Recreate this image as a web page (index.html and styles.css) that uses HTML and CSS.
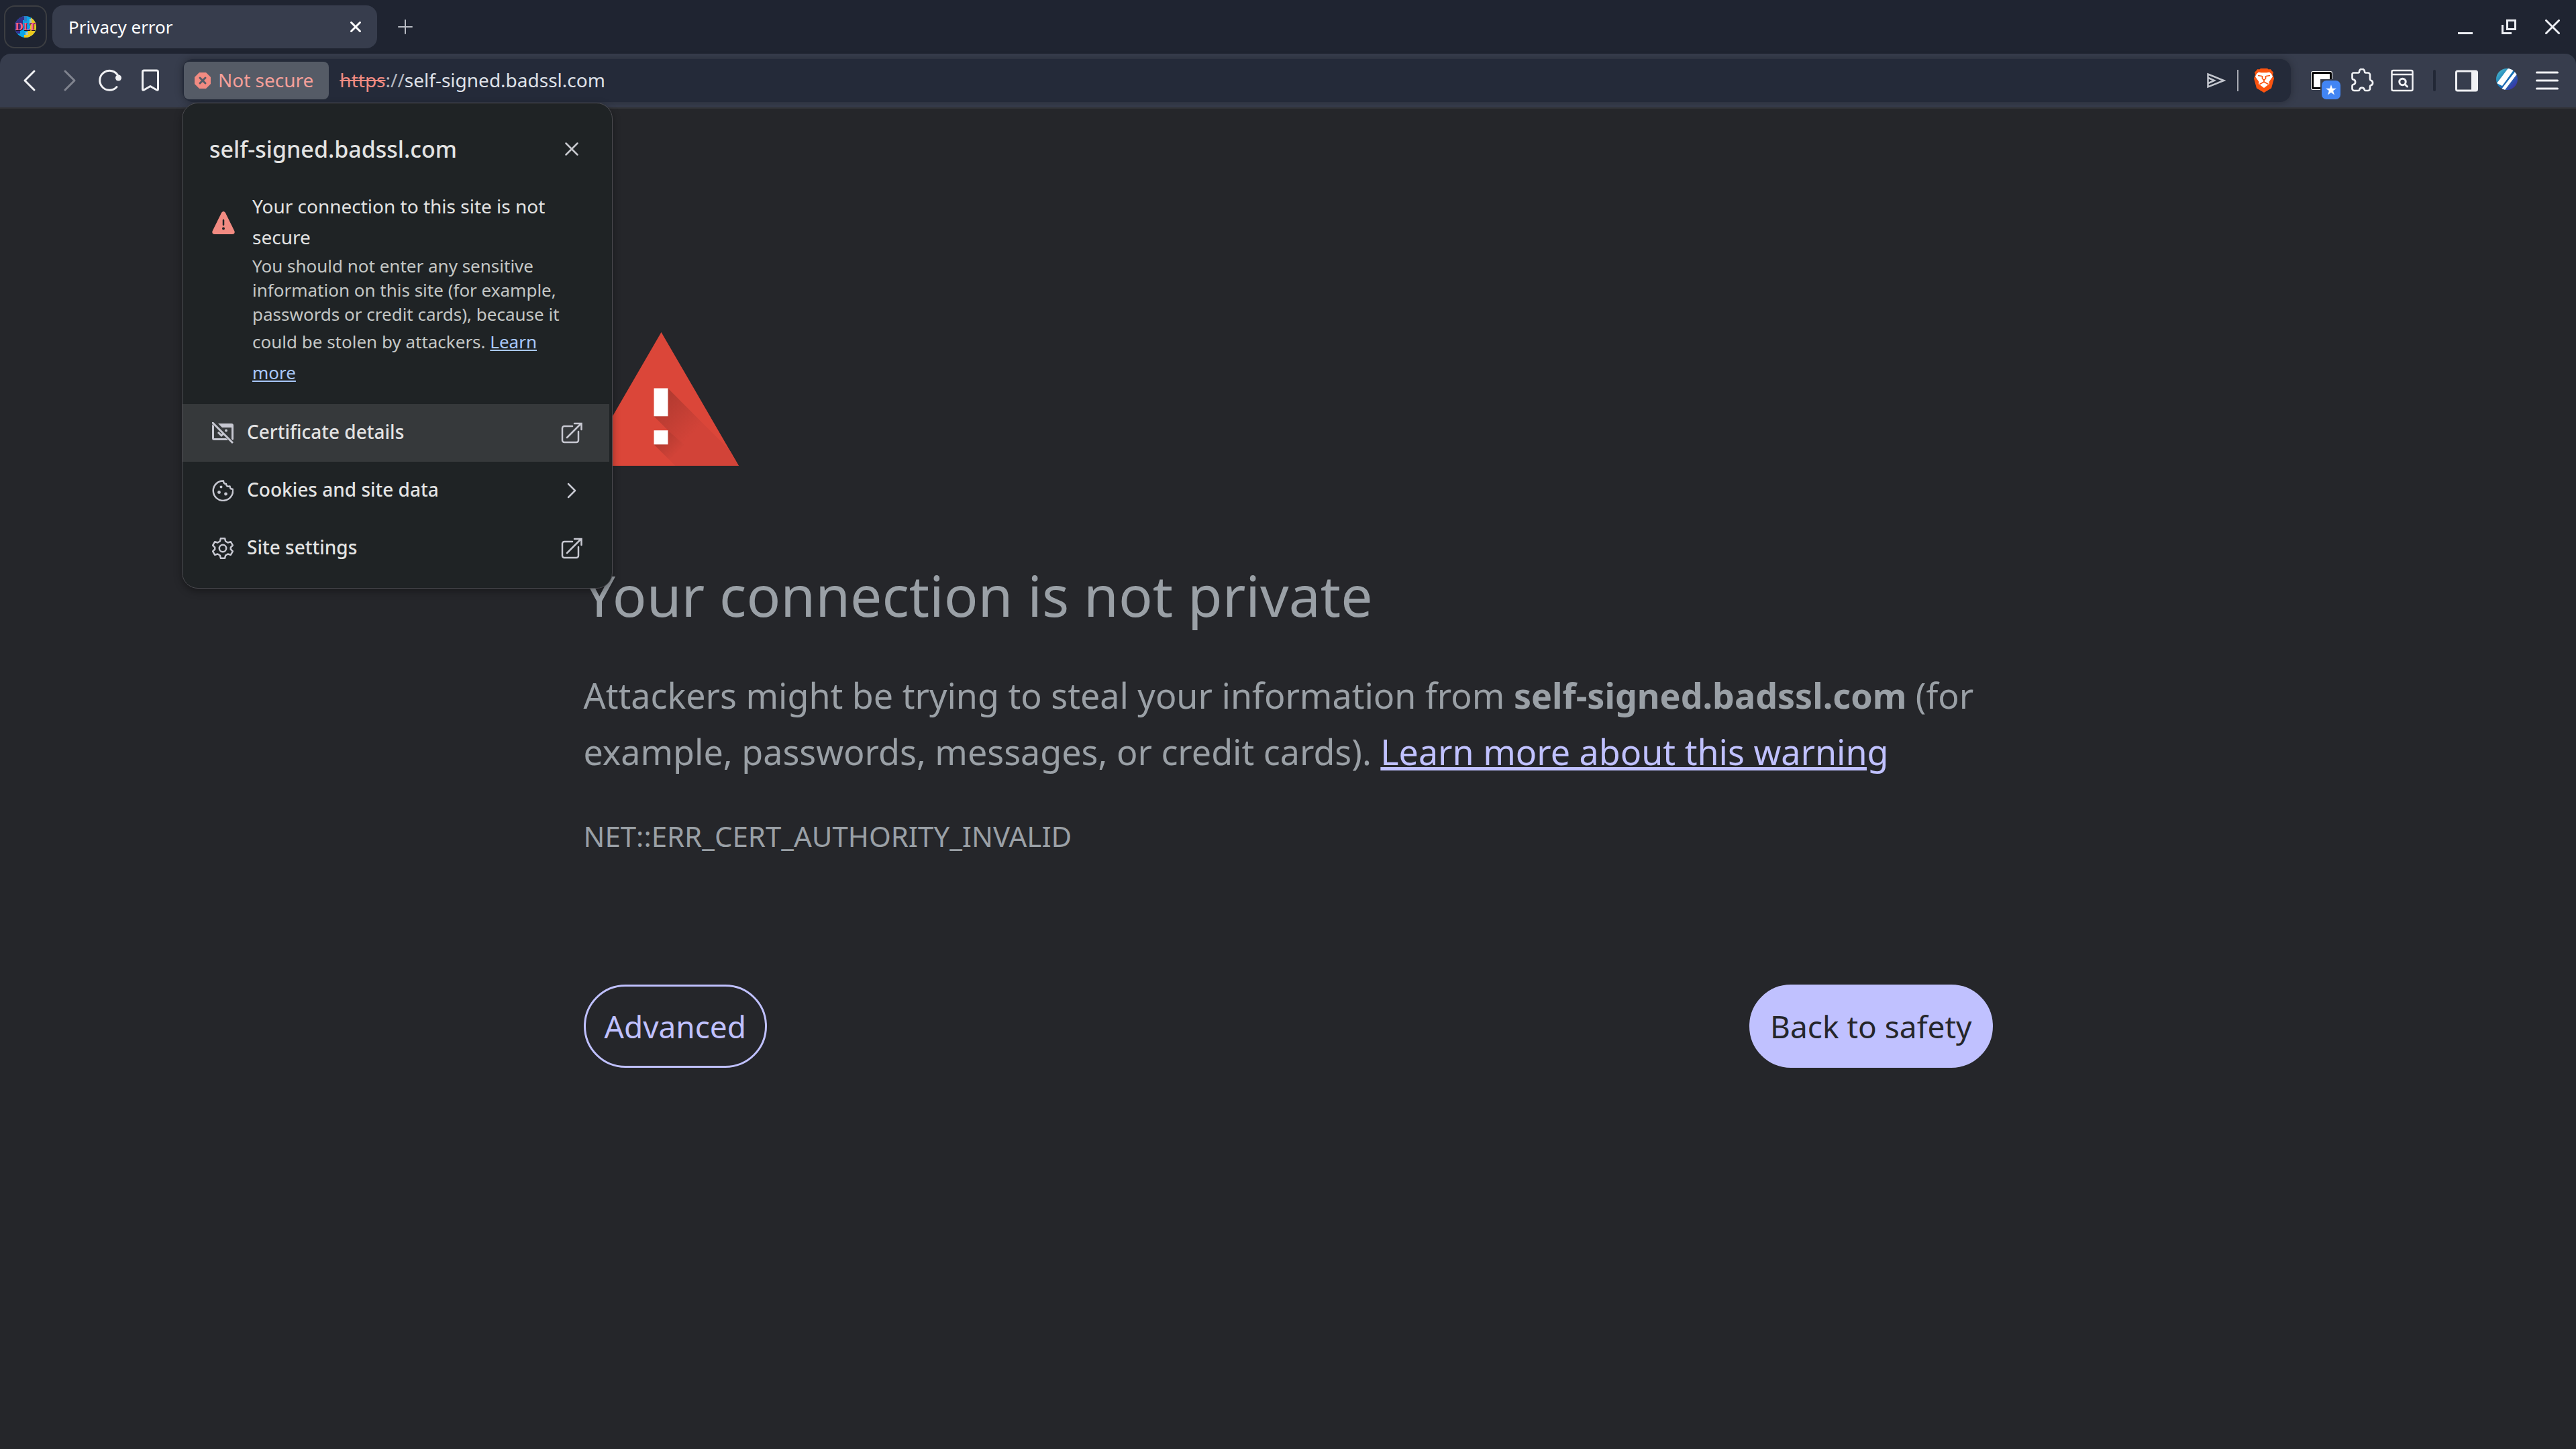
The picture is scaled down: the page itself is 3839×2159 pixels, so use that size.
FILE: index.html
```html
<!DOCTYPE html>
<html lang="en">
<head>
  <meta charset="UTF-8" />
  <meta name="viewport" content="width=device-width, initial-scale=1.0"/>
  <title>Privacy error</title>
  <link rel="stylesheet" href="styles.css">
</head>
<body>

<header class="tab-strip">
  <button class="profile" aria-label="Pinned tab">
    <svg width="32" height="32" viewBox="0 0 32 32">
      <clipPath id="disc"><circle cx="16" cy="16" r="16"/></clipPath>
      <g clip-path="url(#disc)">
        <rect width="32" height="32" fill="#0aa5e8"/>
        <path d="M0 0h14v6h-2v12H8v8H0z" fill="#352f86"/>
        <path d="M14 0h4v8h-4z" fill="#2f7fc4"/>
        <path d="M24 0h8v32H14v-4h5v-6h4V8h1z" fill="#ecc81c"/>
        <path d="M22 4h3v8h-3zM16 24h4v4h-4z" fill="#a9c4c0"/>
      </g>
      <text class="logo-shade" x="17" y="22" text-anchor="middle">DLT</text>
      <text class="logo-text" x="16" y="21" text-anchor="middle">DLT</text>
    </svg>
  </button>

  <div class="tab">
    <span class="tab-title">Privacy error</span>
    <button class="icon-button tab-close" aria-label="Close tab">
      <svg width="18" height="18" viewBox="0 0 18 18"><path d="M2.500 2.500l13 13M15.500 2.500l-13 13" stroke="#fff" stroke-width="3" stroke-linecap="round"/></svg>
    </button>
  </div>

  <button class="icon-button new-tab" aria-label="New tab">
    <svg width="22" height="22" viewBox="0 0 22 22"><path d="M11 1v20M1 11h20" stroke="#b9bcc4" stroke-width="2" stroke-linecap="round"/></svg>
  </button>

  <div class="window-controls">
    <button class="icon-button" aria-label="Minimize">
      <svg width="22" height="22" viewBox="0 0 22 22"><path d="M0 19h22v3H0z" fill="#eceef3"/></svg>
    </button>
    <button class="icon-button" aria-label="Restore">
      <svg width="22" height="22" viewBox="0 0 22 22" fill="none" stroke="#eceef3" stroke-width="3"><path d="M8.500 1.500h12v13h-12zM1.500 8v12.500H15"/></svg>
    </button>
    <button class="icon-button" aria-label="Close window">
      <svg width="22" height="22" viewBox="0 0 22 22"><path d="M1.500 1.500l19 19M20.500 1.500l-19 19" stroke="#eceef3" stroke-width="3" stroke-linecap="round"/></svg>
    </button>
  </div>
</header>

<nav class="toolbar">
  <button class="icon-button" aria-label="Back">
    <svg width="36" height="36" viewBox="0 0 36 36"><path d="M25 4L11 18l14 14" fill="none" stroke="#f0f1f4" stroke-width="3" stroke-linecap="round" stroke-linejoin="round"/></svg>
  </button>
  <button class="icon-button" aria-label="Forward" disabled>
    <svg width="36" height="36" viewBox="0 0 36 36"><path d="M11 4l14 14-14 14" fill="none" stroke="#80848f" stroke-width="3" stroke-linecap="round" stroke-linejoin="round"/></svg>
  </button>
  <button class="icon-button" aria-label="Reload">
    <svg width="36" height="36" viewBox="0 0 36 36"><path d="M28 27.500A14.500 14.500 0 1 1 30.500 12" fill="none" stroke="#f0f1f4" stroke-width="3" stroke-linecap="round"/><circle cx="30.500" cy="14" r="4.500" fill="#f0f1f4"/></svg>
  </button>
  <button class="icon-button" aria-label="Bookmark this tab">
    <svg width="36" height="36" viewBox="0 0 36 36"><path d="M6.500 5a2 2 0 0 1 2-2h19a2 2 0 0 1 2 2v26q0 2-2 1L18 26.500 8.500 32q-2 1-2-1z" fill="none" stroke="#f0f1f4" stroke-width="3" stroke-linejoin="round"/></svg>
  </button>

  <div class="address-bar">
    <button class="security-chip">
      <svg width="24" height="24" viewBox="0 0 24 24"><path d="M7 0h10l7 7v10l-7 7H7l-7-7V7z" fill="#f28b82"/><path d="M8 8l8 8M16 8l-8 8" stroke="#555b66" stroke-width="3" stroke-linecap="round"/></svg>
      <span>Not secure</span>
    </button>
    <label class="scheme" for="url"><s>https</s>://</label>
    <input class="url" id="url" type="text" value="self-signed.badssl.com" spellcheck="false">
    <button class="icon-button" aria-label="Share this page">
      <svg width="28" height="24" viewBox="0 0 28 24" fill="none" stroke="#c3c6ce" stroke-width="2.500"><path d="M1.500 2.500L25 12 1.500 21.500zM2 8l9 4-9 4"/></svg>
    </button>
    <span class="divider"></span>
    <button class="icon-button" aria-label="Brave Shields">
      <svg width="32" height="36" viewBox="0 0 32 36">
        <path d="M9 1.500L11 0h10l2 1.500 2.500-.5L30 6l-1 3 2 6-4 14.500L16 36 5 29.500 1 15l2-6-1-3 4.500-5z" fill="#fb5410"/>
        <path d="M5 8l3-2.500 4 .8h8l4-.8L27 8l2 4-5.500 8 .5 3-8 6-8-6 .5-3L3 12z" fill="#fff"/>
        <path d="M7 10.500l6 1M25 10.500l-6 1M13.500 11v4l2.500 2.500 2.500-2.500v-4M16 17.500V20l-6.500 3.500M16 20l6.500 3.500" fill="none" stroke="#fb5410" stroke-width="1.700"/>
      </svg>
    </button>
  </div>

  <button class="icon-button" aria-label="Extension">
    <svg width="32" height="28" viewBox="0 0 32 28"><rect width="32" height="28" rx="3" fill="#fff"/><rect x="2.500" y="2.500" width="27" height="23" rx="1" fill="#fff" stroke="#000" stroke-width="3"/><path d="M14 12h18v16H14z" fill="#3a404e"/></svg>
    <span class="badge"><svg width="16" height="16" viewBox="0 0 16 16"><path d="M8 0l1.900 5.700H16l-4.900 3.600L13 15.500l-5-3.700-5 3.700 1.900-6.200L0 5.700h6.100z" fill="#fff"/></svg></span>
  </button>
  <button class="icon-button" aria-label="Extensions">
    <svg width="36" height="36" viewBox="0 0 36 36"><path d="M5.500 6.500h6.800c1 0 1.700-.8 1.700-1.700a4 4 0 0 1 8 0c0 1 .8 1.700 1.700 1.700H27a3 3 0 0 1 3 3v6.200c0 1 .6 1.700 1.400 2a3.900 3.900 0 0 1 0 7.400c-.8.300-1.400 1-1.400 2V30a3 3 0 0 1-3 3h-3.600c-1 0-1.600-.7-1.800-1.600a3.700 3.700 0 0 0-7.200 0c-.2.900-.9 1.600-1.800 1.600H6.500a3 3 0 0 1-3-3v-4.200c0-1 .7-1.600 1.600-1.800a3.900 3.900 0 0 0 0-7.600C4.200 16.200 3.500 15.500 3.500 14.500v-6a2 2 0 0 1 2-2z" fill="none" stroke="#f0f1f4" stroke-width="2.700" stroke-linejoin="round"/></svg>
  </button>
  <button class="icon-button" aria-label="Search this page">
    <svg width="36" height="36" viewBox="0 0 36 36" fill="none" stroke="#f0f1f4" stroke-width="2.500"><rect x="2.500" y="3" width="31" height="30" rx="2"/><path d="M3 9h30"/><circle cx="18.500" cy="20" r="4.700" stroke-width="3"/><path d="M22 23.500l3.500 3.500" stroke-width="3" stroke-linecap="round"/></svg>
  </button>
  <span class="toolbar-divider"></span>
  <button class="icon-button" aria-label="Show sidebar">
    <svg width="36" height="36" viewBox="0 0 36 36"><rect x="2.500" y="4" width="31" height="29" rx="2" fill="none" stroke="#f0f1f4" stroke-width="3"/><path d="M25 4h9v29h-9z" fill="#f0f1f4"/></svg>
  </button>
  <button class="icon-button" aria-label="Profile">
    <svg width="32" height="36" viewBox="0 0 32 36">
      <linearGradient id="sky" x1="0" y1="0" x2="1" y2="1"><stop offset="0" stop-color="#5cc6d0"/><stop offset=".45" stop-color="#1279b8"/><stop offset="1" stop-color="#4a1fa0"/></linearGradient>
      <clipPath id="face"><circle cx="16" cy="16" r="16"/></clipPath>
      <circle cx="16" cy="16" r="16" fill="url(#sky)"/>
      <g clip-path="url(#face)"><path d="M20-3h10L9 26 1 22zM28 5l4 3L11 36l-4-4z" fill="#fff"/><path d="M31 10L12 35" stroke="#2c57ae" stroke-width="2"/></g>
    </svg>
  </button>
  <button class="icon-button" aria-label="Menu">
    <svg width="34" height="28" viewBox="0 0 34 28"><path d="M1.500 2h31M1.500 14h31M1.500 26h31" stroke="#f0f1f4" stroke-width="3" stroke-linecap="round"/></svg>
  </button>
</nav>

<section class="site-info">
  <div class="site-header">
    <h2>self-signed.badssl.com</h2>
    <button class="icon-button" aria-label="Close">
      <svg width="20" height="20" viewBox="0 0 20 20"><path d="M1.500 1.500l17 17M18.500 1.500l-17 17" stroke="#c7c8ce" stroke-width="2.500" stroke-linecap="round"/></svg>
    </button>
  </div>

  <div class="connection">
    <svg width="34" height="38" viewBox="0 0 34 38"><path d="M14.200 5.800Q17 2.300 19.800 5.800L33.500 33.500Q34.500 38 30 38H4Q-.5 38 .5 33.500z" fill="#f28b82"/><path d="M17 17v7" stroke="#1f2325" stroke-width="2.500" stroke-linecap="round"/><circle cx="17" cy="29.500" r="2" fill="#1f2325"/></svg>
    <h3>Your connection to this site is not secure</h3>
    <p>You should not enter any sensitive information on this site (for example, passwords or credit cards), because it could be stolen by attackers. <a href="#">Learn more</a></p>
  </div>

  <button class="site-row active">
    <svg width="32" height="32" viewBox="0 0 32 32"><path d="M9 2h20a3 3 0 0 1 3 3v20a3 3 0 0 1-1 2l-2-2V8H15zM1 3l2 3v18h18l3 3H3a3 3 0 0 1-3-3V5z" fill="#c7c8d1"/><path d="M0 0l31 31" stroke="#c7c8d1" stroke-width="3"/><path d="M9 15l5 5 3-3" fill="none" stroke="#c7c8d1" stroke-width="3"/><circle cx="21" cy="12.500" r="2" fill="#c7c8d1"/></svg>
    <span>Certificate details</span>
    <svg width="32" height="32" viewBox="0 0 32 32" fill="none" stroke="#c7c8d1" stroke-width="2.500"><path d="M17 6H5a3 3 0 0 0-3 3v18a3 3 0 0 0 3 3h18a3 3 0 0 0 3-3V14" stroke-linecap="round"/><path d="M9 23L30 2M20 2h10.500v9" stroke-linecap="round"/></svg>
  </button>
  <button class="site-row">
    <svg width="32" height="32" viewBox="0 0 32 32"><path d="M17 1.500A14.700 14.700 0 1 0 31 14l-3.500-1-1-3.500q-5 1.500-5.500-3.500-4 0-4-4.500z" fill="none" stroke="#c7c8d1" stroke-width="2.500" stroke-linejoin="round"/><g fill="#c7c8d1"><circle cx="13.500" cy="10.500" r="2"/><circle cx="10.500" cy="18.500" r="2.400"/><circle cx="20.500" cy="21" r="2.400"/></g></svg>
    <span>Cookies and site data</span>
    <svg width="32" height="32" viewBox="0 0 32 32"><path d="M11 6l10 10-10 10" fill="none" stroke="#c7c8d1" stroke-width="2.500" stroke-linecap="round" stroke-linejoin="round"/></svg>
  </button>
  <button class="site-row">
    <svg width="32" height="32" viewBox="0 0 32 32" fill="none" stroke="#c7c8d1" stroke-width="2.500" stroke-linejoin="round"><path d="M13 1.200h6l1.200 4.300 3.400 2 4.300-1.200 3 5.200-3.100 3.100v2.800l3.100 3.100-3 5.200-4.300-1.200-3.400 2L19 30.800h-6l-1.200-4.300-3.400-2-4.300 1.200-3-5.200 3.100-3.100v-2.800L1.100 11.500l3-5.200 4.300 1.200 3.400-2z"/><circle cx="16" cy="16" r="5.200"/></svg>
    <span>Site settings</span>
    <svg width="32" height="32" viewBox="0 0 32 32" fill="none" stroke="#c7c8d1" stroke-width="2.500"><path d="M17 6H5a3 3 0 0 0-3 3v18a3 3 0 0 0 3 3h18a3 3 0 0 0 3-3V14" stroke-linecap="round"/><path d="M9 23L30 2M20 2h10.500v9" stroke-linecap="round"/></svg>
  </button>
</section>

<main class="interstitial">
  <svg class="warning-icon" width="231" height="199" viewBox="0 0 232 200">
    <defs>
      <linearGradient id="shade1" gradientUnits="userSpaceOnUse" x1="115" y1="100" x2="165" y2="150"><stop offset="0" stop-color="#b23a30"/><stop offset="1" stop-color="#d24338"/></linearGradient>
      <linearGradient id="shade2" gradientUnits="userSpaceOnUse" x1="115" y1="156" x2="140" y2="181"><stop offset="0" stop-color="#b23a30"/><stop offset="1" stop-color="#d24338"/></linearGradient>
      <clipPath id="tri"><path d="M116 0l116 200H0z"/></clipPath>
    </defs>
    <g clip-path="url(#tri)">
      <rect width="232" height="200" fill="#db4639"/>
      <path d="M105 126l21-42 116 116h-63z" fill="url(#shade1)"/>
      <path d="M105 168l21-21 60 53h-49z" fill="url(#shade2)"/>
      <path d="M105 84h21v42h-21zM105 147h21v21h-21z" fill="#fff"/>
    </g>
  </svg>
  <h1>Your connection is not private</h1>
  <p>Attackers might be trying to steal your information from <strong>self-signed.badssl.com</strong> (for example, passwords, messages, or credit cards). <a href="#">Learn more about this warning</a></p>
  <div class="error-code">NET::ERR_CERT_AUTHORITY_INVALID</div>
  <div class="nav-buttons">
    <button class="page-button">Advanced</button>
    <button class="page-button primary">Back to safety</button>
  </div>
</main>

</body>
</html>
```
FILE: styles.css
```css
* {
  box-sizing: border-box;
}

body {
  margin: 0;
  min-height: 100vh;
  font-family: 'Noto Sans', sans-serif;
  background-color: #1f2431;
  color: #e3e3e3;
  display: flex;
  flex-direction: column;
}

button {
  font-family: inherit;
  cursor: pointer;
}

svg {
  display: block;
  flex: none;
}

h1, h2, h3, p {
  margin: 0;
}

.icon-button {
  position: relative;
  flex: none;
  width: 56px;
  height: 56px;
  padding: 0;
  border: none;
  background: none;
  display: flex;
  align-items: center;
  justify-content: center;
}

/* Tab strip */
.tab-strip {
  display: flex;
  align-items: center;
  gap: 8px;
  height: 80px;
  padding: 0 7px 0 6px;
}

.profile {
  width: 64px;
  height: 64px;
  padding: 0 0 0 14px;
  border: 2px solid #3c3e42;
  border-radius: 16px;
  background: none;
}

.logo-text, .logo-shade {
  font-family: 'DejaVu Serif', serif;
  font-size: 14px;
  font-weight: bold;
  fill: #ff5f91;
}

.logo-shade {
  fill: #1a1020;
}

.tab {
  flex: 0 1 484px;
  height: 64px;
  padding-left: 24px;
  padding-right: 4px;
  border-radius: 16px;
  background-color: #373d4d;
  display: flex;
  align-items: center;
  justify-content: space-between;
}

.tab-title {
  font-size: 26px;
  color: #fff;
}

.new-tab {
  margin-left: 6px;
}

.window-controls {
  margin-left: auto;
  display: flex;
  gap: 9px;
}

/* Toolbar */
.toolbar {
  display: flex;
  align-items: center;
  gap: 4px;
  height: 80px;
  padding: 0 15px 0 16px;
  border-radius: 16px 16px 0 0;
  background-color: #373d4d;
}

.address-bar {
  flex: 1;
  min-width: 0;
  height: 64px;
  margin: 0 14px 0 16px;
  padding: 0 12px 0 2px;
  border-radius: 16px;
  background-color: #242a39;
  box-shadow: 0 0 12px rgba(0, 0, 0, 0.3);
  display: flex;
  align-items: center;
}

.security-chip {
  flex: none;
  height: 56px;
  margin-right: 16px;
  padding: 0 23px 0 16px;
  border: none;
  border-radius: 8px;
  background-color: #555b66;
  color: #f6a09a;
  font-size: 28px;
  display: flex;
  align-items: center;
  gap: 11px;
}

.security-chip span {
  padding-bottom: 2px;
}

.scheme, .url {
  padding: 0 0 2px;
  font-size: 28px;
  line-height: 38px;
  color: #b5b8c0;
}

.scheme s {
  color: #f28b82;
}

.url {
  flex: 1;
  min-width: 0;
  border: none;
  outline: none;
  background: none;
  font-family: inherit;
  color: #dfe1e8;
}

.divider {
  width: 2px;
  height: 32px;
  margin: 0 10px 0 3px;
  background-color: #a9acb4;
}

.toolbar-divider {
  width: 4px;
  height: 32px;
  margin: 0 14px;
  border-radius: 2px;
  background-color: #222836;
}

.badge {
  position: absolute;
  right: 0;
  bottom: 0;
  width: 28px;
  height: 28px;
  border-radius: 7px;
  background-color: #4285f4;
  display: flex;
  align-items: center;
  justify-content: center;
}

/* Site info popup */
.site-info {
  position: absolute;
  top: 153px;
  left: 271px;
  width: 642px;
  padding: 45px 0 16px;
  border: 1px solid #4b4b50;
  border-radius: 24px;
  background-color: #1f2325;
  box-shadow: 0 4px 12px rgba(0, 0, 0, 0.35);
}

.site-header {
  display: flex;
  align-items: center;
  justify-content: space-between;
  height: 46px;
  padding: 0 32px 0 40px;
}

.site-header h2 {
  font-size: 34px;
  font-weight: 500;
  line-height: 46px;
}

.connection {
  display: grid;
  grid-template-columns: 32px 1fr;
  column-gap: 28px;
  row-gap: 2px;
  align-items: center;
  padding: 39px 72px 24px 44px;
}

.connection h3 {
  font-size: 28px;
  font-weight: 400;
  line-height: 46px;
}

.connection p {
  grid-column: 2;
  font-size: 26px;
  line-height: 36px;
  color: #c4c7c5;
}

.connection a {
  line-height: 46px;
  color: #a8c7fa;
}

.site-row {
  width: calc(100% - 4px);
  height: 86px;
  padding: 0 40px 0 44px;
  border: none;
  background: none;
  color: #e3e3e3;
  font-size: 28px;
  font-weight: 500;
  text-align: left;
  display: flex;
  align-items: center;
  gap: 20px;
}

.site-row span {
  flex: 1;
  padding-bottom: 4px;
}

.site-row.active {
  background-color: #36393b;
}

/* Warning page */
.interstitial {
  flex: 1;
  padding: 333px max(32px, calc(50% - 1050px)) 64px;
  border-top: 2px solid #313236;
  background-color: #25262a;
  color: #9aa0a6;
}

.warning-icon {
  margin-bottom: 135px;
}

.interstitial h1 {
  margin-bottom: 50px;
  font-size: 84px;
  font-weight: 400;
  line-height: 115px;
}

.interstitial p {
  margin-bottom: 55px;
  font-size: 52px;
  line-height: 84px;
}

.interstitial p a {
  color: #c0c1ff;
}

.error-code {
  font-size: 42px;
  line-height: 58px;
}

.nav-buttons {
  display: flex;
  justify-content: space-between;
  margin-top: 192px;
}

.page-button {
  padding: 28px;
  border: 3px solid #c0c1ff;
  border-radius: 62px;
  background: none;
  color: #c0c1ff;
  font-size: 46px;
  line-height: 62px;
}

.page-button.primary {
  background-color: #c0c1ff;
  color: #25262a;
}
```
